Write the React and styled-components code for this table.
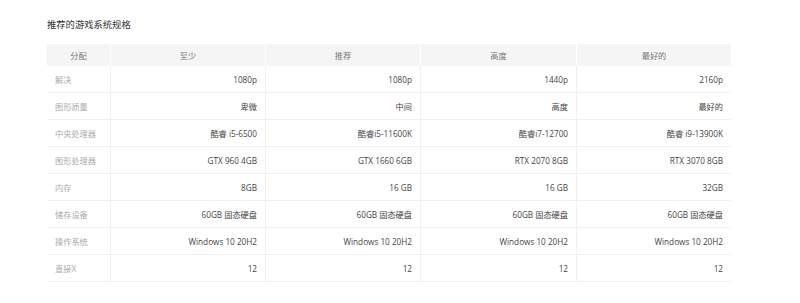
import React from "react";
import styled, { createGlobalStyle } from "styled-components";

const Global = createGlobalStyle`
  html, body { margin: 0; padding: 0; background: #fff; }
  body { font-family: "Open Sans", "Noto Sans CJK SC", sans-serif; }
`;

const Page = styled.div`
  width: 800px;
  height: 303px;
  padding: 18px 0 0 47px;
  box-sizing: border-box;
`;

const Title = styled.h3`
  margin: 0 0 13px;
  font-size: 9.3px;
  font-weight: 400;
  line-height: 13px;
  color: #333;
`;

const Table = styled.div`
  display: grid;
  grid-template-columns: 63px 155px 155px 156px 155px;
  width: 684px;
`;

const HeadCell = styled.div`
  height: 22px;
  background: #f5f5f5;
  border-left: ${(p) => (p.$first ? "none" : "1px solid #fff")};
  display: flex;
  align-items: center;
  justify-content: center;
  font-size: 8.2px;
  color: #777;
`;

const Cell = styled.div`
  height: 27px;
  box-sizing: border-box;
  border-bottom: 1px solid #efefef;
  border-left: ${(p) => (p.$first ? "none" : "1px solid #f0f0f0")};
  display: flex;
  align-items: center;
  justify-content: ${(p) => (p.$first ? "flex-start" : "flex-end")};
  padding: ${(p) => (p.$first ? "0 0 0 8px" : "0 8px 0 0")};
  font-size: 8.2px;
  color: ${(p) => (p.$first ? "#aaa" : "#444")};
`;

const heads = ["分配", "至少", "推荐", "高度", "最好的"];
const rows = [
  ["解决", "1080p", "1080p", "1440p", "2160p"],
  ["图形质量", "卑微", "中间", "高度", "最好的"],
  ["中央处理器", "酷睿 i5-6500", "酷睿i5-11600K", "酷睿i7-12700", "酷睿 i9-13900K"],
  ["图形处理器", "GTX 960 4GB", "GTX 1660 6GB", "RTX 2070 8GB", "RTX 3070 8GB"],
  ["内存", "8GB", "16 GB", "16 GB", "32GB"],
  ["储存设备", "60GB 固态硬盘", "60GB 固态硬盘", "60GB 固态硬盘", "60GB 固态硬盘"],
  ["操作系统", "Windows 10 20H2", "Windows 10 20H2", "Windows 10 20H2", "Windows 10 20H2"],
  ["直接X", "12", "12", "12", "12"],
];

export default function App() {
  return (
    <>
      <Global />
      <Page>
        <Title>推荐的游戏系统规格</Title>
        <Table>
          {heads.map((h, i) => (
            <HeadCell key={h} $first={i === 0}>{h}</HeadCell>
          ))}
          {rows.map((r) =>
            r.map((c, i) => (
              <Cell key={r[0] + i} $first={i === 0}>{c}</Cell>
            ))
          )}
        </Table>
      </Page>
    </>
  );
}
